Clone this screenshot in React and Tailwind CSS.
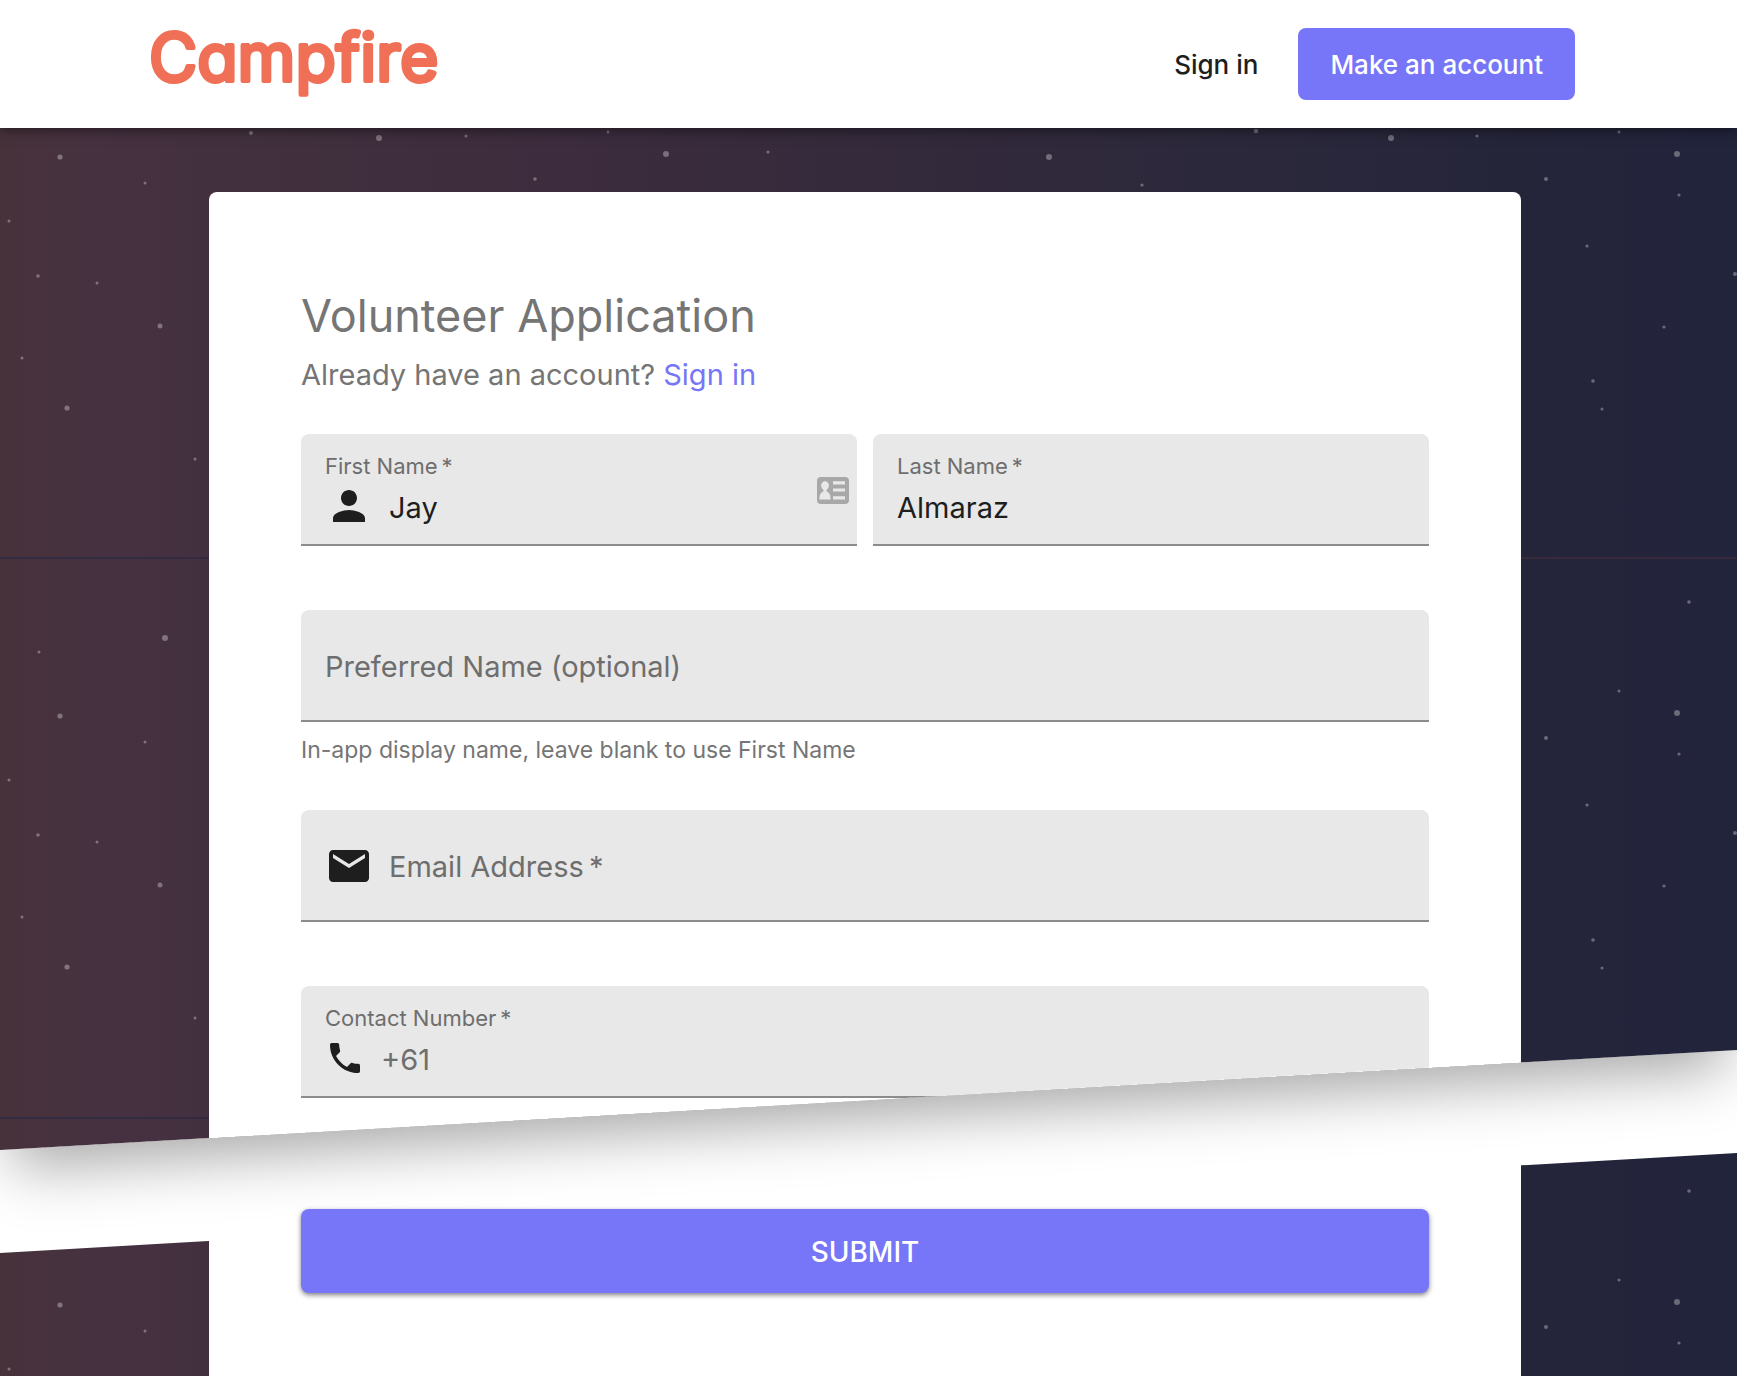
import { useId } from 'react';
import { MdEmail, MdPerson, MdPhone } from 'react-icons/md';

const SKY_TILES = [0, 559, 1148];

const STARS = [
  [39, 93, 1.5], [165, 79, 3], [251, 133, 2], [379, 138, 3], [466, 136, 1.5],
  [60, 157, 2.6], [145, 183, 1.5], [535, 179, 1.8], [9, 221, 1.5], [38, 276, 1.8],
  [97, 283, 1.5], [160, 326, 2.5], [22, 358, 1.5], [67, 408, 2.6], [195, 459, 1.5],
  [608, 132, 1.4], [666, 154, 3], [768, 152, 1.6], [1049, 157, 3], [1142, 185, 1.6],
  [1256, 131, 2.2], [1391, 138, 3], [1477, 136, 1.5], [1619, 132, 1.5], [1677, 154, 3],
  [1689, 43, 1.8], [1546, 179, 2], [1679, 195, 1.6], [1587, 246, 1.6], [1735, 274, 2],
  [1664, 327, 1.6], [1593, 381, 1.8], [1602, 409, 1.5],
];

function Sky() {
  return (
    <div className="absolute inset-0 -z-10 overflow-hidden bg-[linear-gradient(to_right,#47323b,#463141_6%,#42303e_14%,#3c2c3d_33%,#342a3b_50%,#2b283b_72%,#25253a_87%,#22243c)]">
      <svg className="absolute top-0 left-0 h-full w-full" viewBox="0 0 1737 1376" preserveAspectRatio="xMidYMin slice" aria-hidden="true">
        <defs>
          <linearGradient id="seam" x1="0" x2="1" y1="0" y2="0">
            <stop offset="0" stopColor="#322b42" />
            <stop offset="1" stopColor="#372a3b" />
          </linearGradient>
        </defs>
        <rect x="0" y="557" width="1737" height="2" fill="url(#seam)" />
        <rect x="0" y="1117" width="1737" height="2" fill="url(#seam)" />
        {SKY_TILES.map((top) => (
          <g key={top} transform={`translate(0 ${top})`} fill="#ffffff" fillOpacity="0.32">
            {STARS.map(([x, y, r]) => (
              <circle key={`${x}-${y}`} cx={x} cy={y} r={r} />
            ))}
          </g>
        ))}
      </svg>
    </div>
  );
}

function Logo() {
  return (
    <a href="#home" className="block">
      <svg className="h-[72px] w-[300px] overflow-visible" viewBox="0 0 300 72" role="img" aria-label="Campfire">
        <text
          x="-2"
          y="53"
          className="fill-[#f07057] stroke-[#f07057] font-['Inter',sans-serif] text-[66px] font-normal [font-feature-settings:'cv11']"
          strokeWidth="4"
          strokeLinejoin="round"
        >
          Campfire
        </text>
      </svg>
    </a>
  );
}

function ContactCardIcon() {
  return (
    <svg className="h-[27px] w-8 shrink-0" viewBox="0 0 32 27" aria-hidden="true">
      <rect width="32" height="27" rx="4" fill="#a8a8a8" />
      <g fill="#e8e8e8">
        <ellipse cx="8" cy="8.6" rx="3.9" ry="4.4" />
        <path d="M6.4 12h3.2v2.4c2.6.8 4 3 4 8.2H2.4c0-5.200 1.400-7.400 4-8.200z" />
        <path d="M16 4.300h12v3.200H16zM16 11.600h12v3H16zM16 19.200h12v3.200H16z" />
      </g>
    </svg>
  );
}

function Required() {
  return <span aria-hidden="true">{'\u2009*'}</span>;
}

function FilledField({ label, icon, trailing, ...input }) {
  const id = useId();
  return (
    <div className="relative h-28 rounded-t-lg border-b-2 border-[#8c8c8c] bg-[#e8e8e8] px-6 pt-4">
      <label htmlFor={id} className="block text-[22px] leading-8 text-[#6e6e6e]">
        {label}
        <Required />
      </label>
      <div className="flex h-12 items-center">
        {icon}
        <input
          id={id}
          required
          className="h-12 w-full min-w-0 bg-transparent pt-0.5 text-[29px] text-[#1e1e1e] outline-none placeholder:text-[#6e6e6e] placeholder:opacity-100"
          {...input}
        />
      </div>
      {trailing && <div className="absolute top-[43px] right-2">{trailing}</div>}
    </div>
  );
}

function EmptyField({ icon, ...input }) {
  return (
    <div className="flex h-28 items-center rounded-t-lg border-b-2 border-[#8c8c8c] bg-[#e8e8e8] px-6 pt-0.5">
      {icon}
      <input
        className="h-12 w-full min-w-0 bg-transparent text-[29px] text-[#1e1e1e] outline-none placeholder:text-[#6e6e6e] placeholder:opacity-100"
        {...input}
      />
    </div>
  );
}

function TornStrip() {
  return (
    <div className="pointer-events-none absolute inset-x-0 bottom-[173px] h-[103px] -skew-y-[3.3deg] overflow-hidden bg-white">
      <div className="-mt-40 h-40 shadow-[0_30px_60px_-12px_rgba(0,0,0,0.35)]" />
    </div>
  );
}

export default function App() {
  return (
    <div className="flex min-h-screen flex-col bg-white font-['Inter',sans-serif]">
      <header className="relative z-10 bg-white pr-[11px] shadow-[0_2px_12px_rgba(0,0,0,0.5)]">
        <div className="mx-auto flex h-32 max-w-[1424px] items-center justify-between">
          <Logo />
          <nav className="flex items-center gap-10 text-[26px] font-medium">
            <a href="#sign-in" className="text-[#1e1e1e]">Sign in</a>
            <a href="#sign-up" className="flex h-[72px] items-center rounded-lg bg-[#7775f8] px-8 text-white">
              Make an account
            </a>
          </nav>
        </div>
      </header>

      <div className="relative isolate -mt-32 flex-1 pt-48 pr-[7px]">
        <Sky />
        <main className="mx-auto max-w-[1312px] rounded-t-lg bg-white px-[92px] pt-[92px] pb-[83px]">
          <h1 className="text-[45px] leading-[64px] text-[#757575]">Volunteer Application</h1>
          <p className="text-[29px] leading-[54px] text-[#757575]">
            Already have an account?{' '}
            <a href="#sign-in" className="text-[#7775f8]">Sign in</a>
          </p>

          <form className="mt-8" onSubmit={(event) => event.preventDefault()}>
            <div className="grid grid-cols-2 gap-4">
              <FilledField
                label="First Name"
                name="firstName"
                defaultValue="Jay"
                icon={<MdPerson className="mr-4 size-12 shrink-0 text-[#1e1e1e]" aria-hidden="true" />}
                trailing={<ContactCardIcon />}
              />
              <FilledField label="Last Name" name="lastName" defaultValue="Almaraz" />
            </div>

            <div className="mt-16">
              <EmptyField name="preferredName" aria-label="Preferred Name" placeholder="Preferred Name (optional)" />
              <p className="mt-3 text-[23px] leading-8 text-[#757575]">
                In-app display name, leave blank to use First Name
              </p>
            </div>

            <div className="mt-11">
              <EmptyField
                type="email"
                name="email"
                required
                aria-label="Email Address"
                placeholder={'Email Address\u2009*'}
                icon={<MdEmail className="mr-4 size-12 shrink-0 text-[#1e1e1e]" aria-hidden="true" />}
              />
            </div>

            <div className="mt-16">
              <FilledField
                label="Contact Number"
                type="tel"
                name="phone"
                placeholder="+61"
                icon={<MdPhone className="mr-4 size-10 shrink-0 text-[#1e1e1e]" aria-hidden="true" />}
              />
            </div>

            <TornStrip />

            <button
              type="submit"
              className="relative mt-[111px] h-[84px] w-full rounded-lg bg-[#7775f8] pt-0.5 text-[28px] font-medium text-white shadow-[0_2px_5px_rgba(0,0,0,0.5)]"
            >
              SUBMIT
            </button>
          </form>
        </main>
      </div>
    </div>
  );
}
